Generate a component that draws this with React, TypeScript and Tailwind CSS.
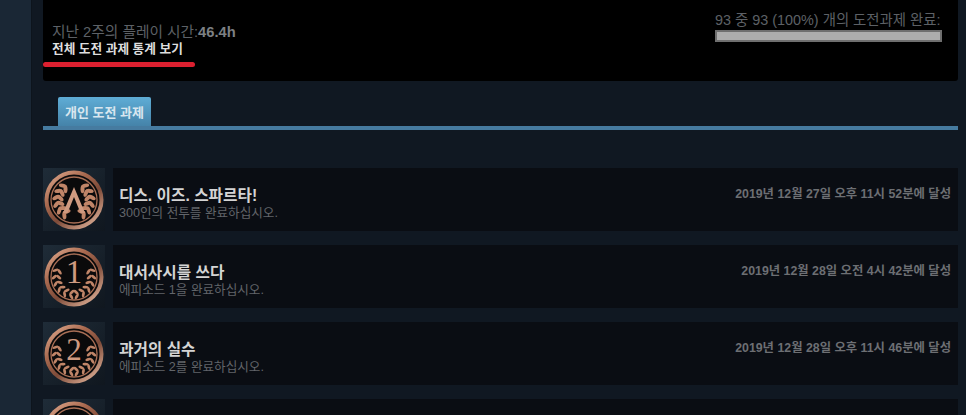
const sans = "font-['Liberation_Sans','Noto_Sans_CJK_KR',sans-serif]";

function Wreath({ from, to, r, n = 6, rx = 1.4, ry = 3.1 }: { from: number; to: number; r: number; n?: number; rx?: number; ry?: number }) {
  const leaves = Array.from({ length: n }).flatMap((_, i) => {
    const deg = from + ((to - from) * i) / (n - 1);
    const a = (deg * Math.PI) / 180;
    const cx = 30 + r * Math.cos(a);
    const cy = 30 + r * Math.sin(a);
    return [
      { cx: cx - 2.2 * Math.cos(a), cy: cy - 2.2 * Math.sin(a), rot: deg - 90 + 38 },
      { cx: cx + 2.2 * Math.cos(a), cy: cy + 2.2 * Math.sin(a), rot: deg - 90 - 38 },
    ];
  });
  return (
    <g fill="#c08568">
      {leaves.map((l, k) => (
        <g key={k}>
          <ellipse cx={l.cx} cy={l.cy} rx={rx} ry={ry} transform={`rotate(${l.rot} ${l.cx} ${l.cy})`} />
          <ellipse cx={60 - l.cx} cy={l.cy} rx={rx} ry={ry} transform={`rotate(${-l.rot} ${60 - l.cx} ${l.cy})`} />
        </g>
      ))}
    </g>
  );
}

function Medal({ id, kind }: { id: string; kind: "lambda" | "1" | "2" | "3" }) {
  return (
    <svg width="60" height="60" viewBox="0 0 60 60" className="block">
      <defs>
        <linearGradient id={id} x1="0.15" y1="0.05" x2="0.85" y2="0.95">
          <stop offset="0" stopColor="#d8a084" />
          <stop offset="0.3" stopColor="#a8694f" />
          <stop offset="0.6" stopColor="#7e4b39" />
          <stop offset="1" stopColor="#dcae95" />
        </linearGradient>
      </defs>
      <circle cx="30" cy="30" r="29.5" fill={`url(#${id})`} />
      <circle cx="30" cy="30" r="25.5" fill="#0a0a0b" />
      <circle cx="30" cy="30" r="23" fill="none" stroke="#a96f56" strokeWidth="1.3" />
      {kind === "lambda" ? <Wreath from={122} to={232} r={16} n={6} rx={2} ry={4} /> : <Wreath from={98} to={200} r={17.5} />}
      {kind === "lambda" ? (
        <path d="M30 17 L41 43 L36.5 43 L30 27 L23.5 43 L19 43 Z" fill="#cf9a80" />
      ) : (
        <text
          x="30"
          y="36"
          textAnchor="middle"
          fill="#cf9a80"
          fontSize={kind === "1" ? 33 : 31}
          fontFamily="'Liberation Serif', serif"
        >
          {kind}
        </text>
      )}
    </svg>
  );
}

const rows = [
  { kind: "lambda" as const, title: "디스. 이즈. 스파르타!", desc: "300인의 전투를 완료하십시오.", date: "2019년 12월 27일 오후 11시 52분에 달성" },
  { kind: "1" as const, title: "대서사시를 쓰다", desc: "에피소드 1을 완료하십시오.", date: "2019년 12월 28일 오전 4시 42분에 달성" },
  { kind: "2" as const, title: "과거의 실수", desc: "에피소드 2를 완료하십시오.", date: "2019년 12월 28일 오후 11시 46분에 달성" },
  { kind: "3" as const, title: "", desc: "", date: "" },
];

export default function App() {
  return (
    <div className={`flex h-[415px] w-[966px] overflow-hidden bg-[#101822] ${sans}`}>
      <div className="w-[32px] shrink-0 border-r border-r-[#0d141c] bg-[#1a2735]" />
      <div className="flex min-w-0 flex-1 flex-col pl-[11px] pr-[8px]">
        <div className="flex h-[81px] shrink-0 justify-between rounded-b-[3px] bg-black pl-[9px] pr-[16px] pt-[24px]">
          <div className="flex flex-col items-start">
            <div className="text-[14.7px] leading-[16px] text-[#5d6166]">
              지난 2주의 플레이 시간:<span className="font-bold text-[#7d8084]">46.4h</span>
            </div>
            <div className="mt-[1px] text-[12.7px] font-bold leading-[16px] text-[#dedede]">전체 도전 과제 통계 보기</div>
            <div className="-ml-[9px] mt-[5px] h-[5px] w-[152px] rounded-full bg-[#dc2030]" />
          </div>
          <div className="-mt-[12px] flex w-[227px] flex-col">
            <div className="whitespace-nowrap text-[14.4px] leading-[17px] text-[#5d6166]">93 중 93 (100%) 개의 도전과제 완료:</div>
            <div className="mt-[1px] h-[12px] border-2 border-[#6f6f6f] bg-[#adadad]" />
          </div>
        </div>

        <div className="mt-[16px] flex h-[29px] shrink-0 pl-[15px]">
          <div className="flex w-[93px] items-center justify-center rounded-t-[2px] bg-gradient-to-b from-[#5fadd6] to-[#4583a9] pt-[2px] text-[13px] font-bold text-[#d8e6ef]">
            개인 도전 과제
          </div>
        </div>
        <div className="h-[4px] shrink-0 bg-[#467ba0]" />

        <div className="mt-[38px] flex flex-col gap-[14px]">
          {rows.map((r, i) => (
            <div key={i} className="flex h-[63px] shrink-0 gap-[8px]">
              <div className="flex w-[62px] shrink-0 justify-center bg-gradient-to-br from-[#1f2c38] to-[#10171f] pt-[2px]">
                <Medal id={`medal-${i}`} kind={r.kind} />
              </div>
              <div className="flex flex-1 justify-between bg-[#0a0d13] pl-[6px] pr-[7px]">
                <div className="pt-[20px]">
                  <div className="text-[15.7px] font-bold leading-[16px] text-[#d4d4d4]">{r.title}</div>
                  <div className="mt-[2px] text-[12.6px] leading-[14px] text-[#62656a]">{r.desc}</div>
                </div>
                <div className="pt-[19px] text-[12.35px] font-bold leading-[14px] text-[#6d6f73]">{r.date}</div>
              </div>
            </div>
          ))}
        </div>
      </div>
    </div>
  );
}
